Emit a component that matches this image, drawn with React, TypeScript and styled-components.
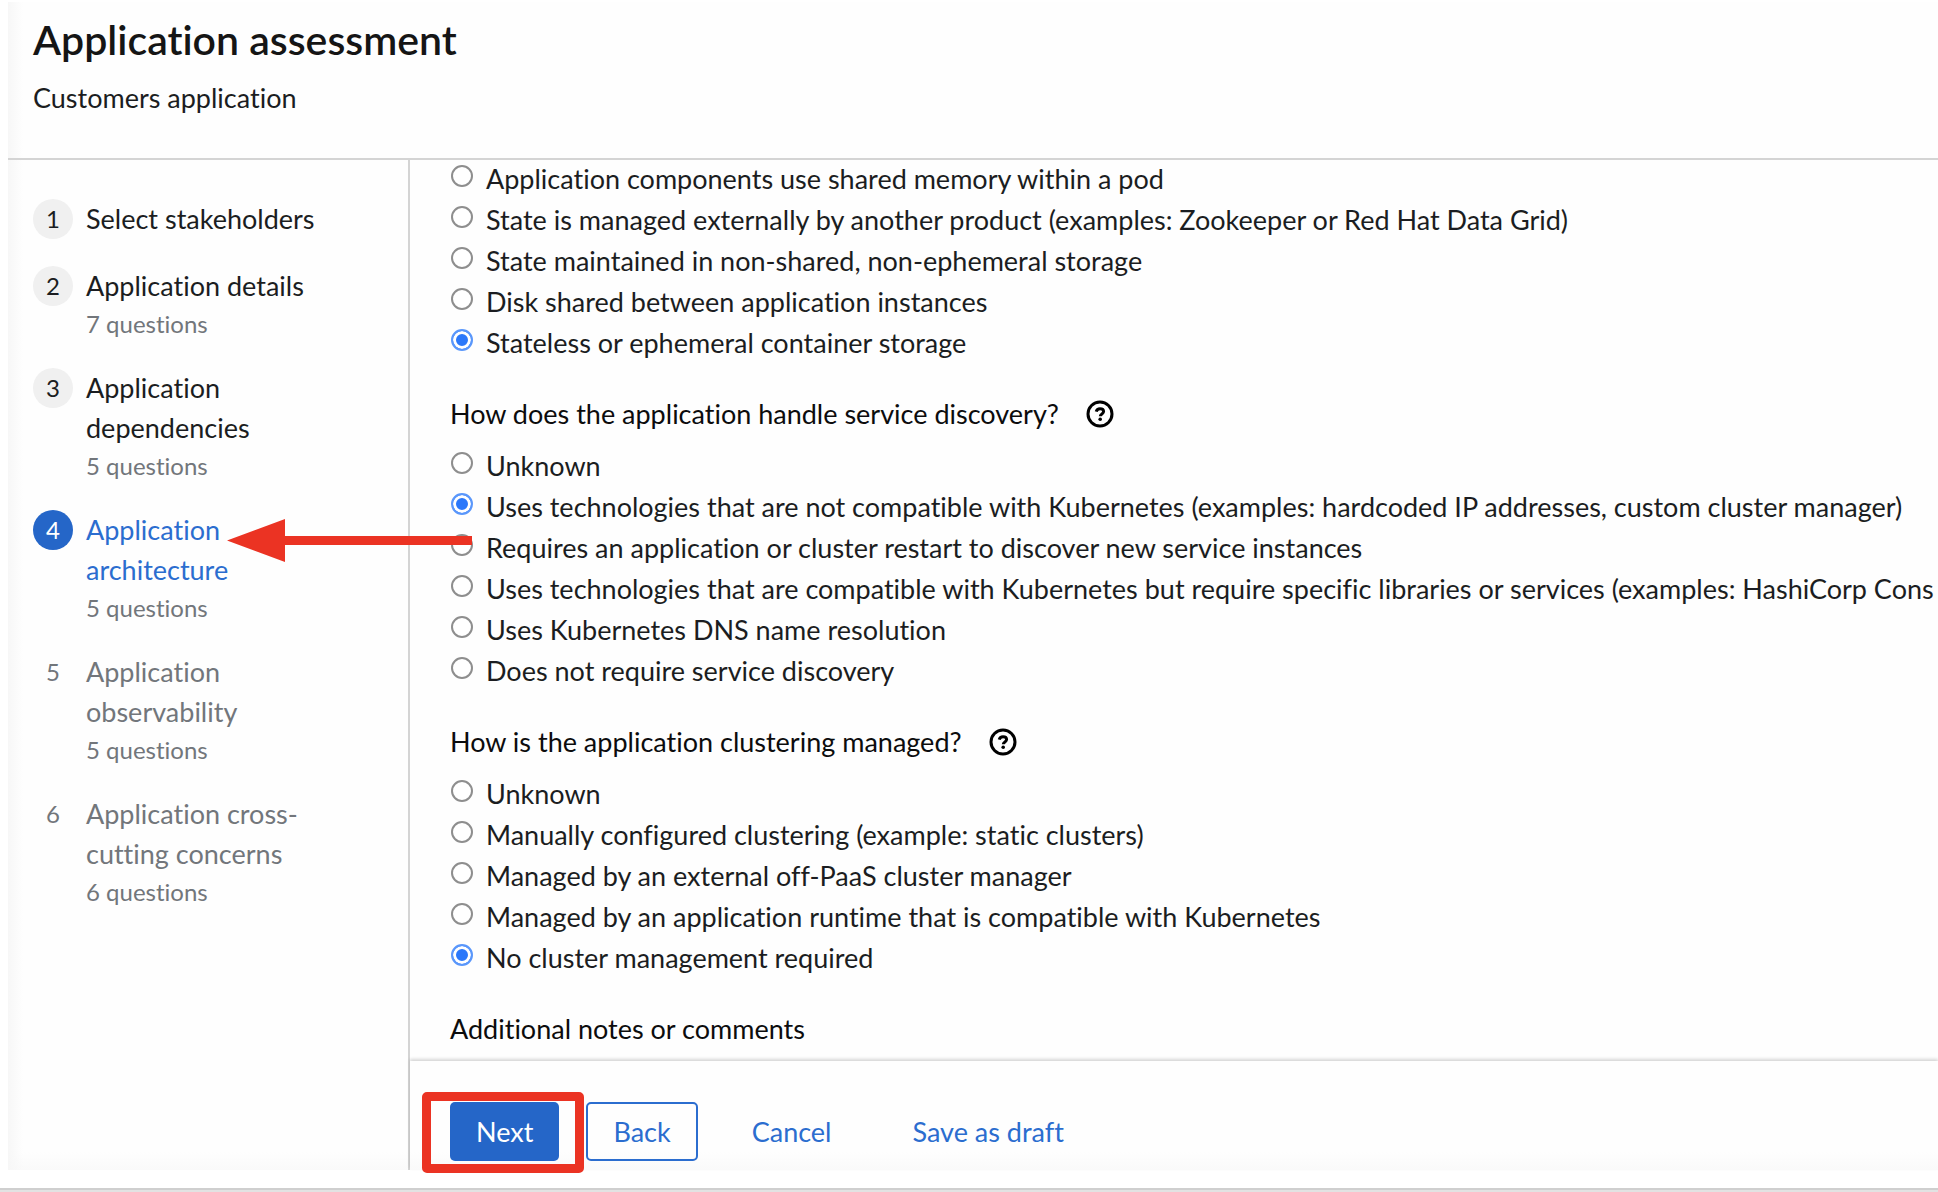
import React, { useState } from "react";
import styled, { createGlobalStyle } from "styled-components";

const colors = {
  text: "#1b1d21",
  muted: "#72767b",
  blue: "#2566c8",
  link: "#2b6dcf",
  radio: "#2b78fa",
  rule: "#d4d4d4",
  mark: "#eb3323",
};

const GlobalStyle = createGlobalStyle`
  *, *::before, *::after { box-sizing: border-box; }
  body {
    margin: 0;
    background: #fff;
    color: ${colors.text};
    font-family: Lato, "Open Sans", sans-serif;
    font-size: 27px;
    line-height: 40px;
    font-variant-ligatures: none;
  }
`;

const Page = styled.div`
  display: flex;
  flex-direction: column;
  height: 100vh;
  padding: 2px 0 0 8px;
  overflow: hidden;
`;

const Wizard = styled.div`
  flex: 1;
  min-height: 0;
  display: flex;
  flex-direction: column;
  background:
    linear-gradient(to right, #f7f7f7, rgba(255, 255, 255, 0) 15px),
    linear-gradient(to top, #fafafa, rgba(255, 255, 255, 0) 18px),
    #fefefe;
`;

const Header = styled.header`
  padding: 12px 25px 36px;
  border-bottom: 2px solid ${colors.rule};
`;

const Title = styled.h1`
  margin: 0;
  color: #151515;
  font-size: 41px;
  line-height: 52px;
  font-weight: 600;
`;

const Subtitle = styled.p`
  margin: 12px 0 4px;
`;

const Body = styled.div`
  flex: 1;
  min-height: 0;
  display: flex;
`;

const Nav = styled.nav`
  flex: 0 0 402px;
  padding: 39px 48px 0 25px;
  border-right: 2px solid ${colors.rule};
`;

const Steps = styled.ol`
  display: flex;
  flex-direction: column;
  gap: 27px;
  margin: 0;
  padding: 0;
  list-style: none;
`;

const Step = styled.li`
  position: relative;
`;

type State = "done" | "current" | "todo";

const StepButton = styled.button<{ $state: State }>`
  display: flex;
  gap: 13px;
  width: 100%;
  padding: 0;
  border: 0;
  background: none;
  font: inherit;
  text-align: left;
  cursor: pointer;
  color: ${({ $state }) =>
    $state === "current" ? colors.link : $state === "todo" ? colors.muted : colors.text};
`;

const StepNumber = styled.span<{ $state: State }>`
  flex: 0 0 40px;
  height: 40px;
  border-radius: 50%;
  font-size: 24px;
  text-align: center;
  color: ${({ $state }) => ($state === "current" ? "#fff" : "inherit")};
  background: ${({ $state }) =>
    $state === "current" ? colors.blue : $state === "done" ? "#f0f0f0" : "none"};
`;

const StepText = styled.span`
  display: flex;
  flex-direction: column;
`;

const StepNote = styled.span`
  font-size: 24px;
  line-height: 35px;
  color: ${colors.muted};
`;

const Arrow = styled.svg`
  position: absolute;
  left: 194px;
  top: 9px;
  width: 245px;
  height: 43px;
  z-index: 1;
`;

const Main = styled.main`
  flex: 1;
  min-width: 0;
  display: flex;
  flex-direction: column;
`;

const Questions = styled.form`
  flex: 1;
  min-height: 0;
  overflow: hidden;
  padding-left: 40px;
  display: flex;
  flex-direction: column;
  gap: 34px;
`;

const Question = styled.fieldset`
  flex: none;
  margin: 0;
  padding: 0;
  border: 0;
`;

const Legend = styled.legend`
  display: flex;
  align-items: center;
  gap: 27px;
  padding: 0 0 15px;
  line-height: 36px;
  color: #0c0c0d;
`;

const HelpButton = styled.button`
  display: flex;
  padding: 0;
  border: 0;
  background: none;
  color: #000;
  cursor: pointer;
`;

const Options = styled.div`
  display: flex;
  flex-direction: column;
  gap: 3px;
`;

const Option = styled.label`
  display: flex;
  gap: 13px;
  line-height: 38px;
  white-space: nowrap;
`;

const Radio = styled.input`
  appearance: none;
  flex: none;
  width: 22px;
  height: 22px;
  margin: 5px 0 0 1px;
  border: 2px solid #8e8e8e;
  border-radius: 50%;
  background: #fff;
  &:checked {
    border-color: #5a97fb;
    background: ${colors.radio};
    box-shadow: inset 0 0 0 3px #fff;
  }
`;

const NotesHeading = styled.p`
  flex: none;
  margin: 0;
  line-height: 36px;
  color: #0c0c0d;
`;

const Footer = styled.footer`
  display: flex;
  gap: 27px;
  padding: 41px 40px 9px;
  box-shadow: 0 -2px 3px rgba(0, 0, 0, 0.16);
`;

const Button = styled.button<{ $kind: "primary" | "secondary" | "link" }>`
  height: 59px;
  border-radius: 5px;
  font: inherit;
  cursor: pointer;
  border: ${({ $kind }) => ($kind === "secondary" ? `2px solid ${colors.link}` : "0")};
  padding: ${({ $kind }) =>
    $kind === "secondary" ? "0 25px" : $kind === "primary" ? "0 26px" : "0 27px"};
  background: ${({ $kind }) => ($kind === "primary" ? colors.blue : "none")};
  color: ${({ $kind }) => ($kind === "primary" ? "#fff" : colors.link)};
`;

const Marked = styled.div`
  position: relative;
  display: flex;
  &::after {
    content: "";
    position: absolute;
    inset: -10px -25px -12px -28px;
    border: 9px solid ${colors.mark};
    border-radius: 5px;
    pointer-events: none;
  }
`;

const BottomEdge = styled.div`
  flex: none;
  height: 4px;
  margin: 18px 0 0 -8px;
  border-top: 2px solid #cfcfcf;
  background: #e2e2e2;
`;

const steps: { name: string; note?: string; state: State }[] = [
  { name: "Select stakeholders", state: "done" },
  { name: "Application details", note: "7 questions", state: "done" },
  { name: "Application dependencies", note: "5 questions", state: "done" },
  { name: "Application architecture", note: "5 questions", state: "current" },
  { name: "Application observability", note: "5 questions", state: "todo" },
  { name: "Application cross-cutting concerns", note: "6 questions", state: "todo" },
];

const questions: { id: string; title?: string; options: string[]; answer: number }[] = [
  {
    id: "state",
    options: [
      "Application components use shared memory within a pod",
      "State is managed externally by another product (examples: Zookeeper or Red Hat Data Grid)",
      "State maintained in non-shared, non-ephemeral storage",
      "Disk shared between application instances",
      "Stateless or ephemeral container storage",
    ],
    answer: 4,
  },
  {
    id: "discovery",
    title: "How does the application handle service discovery?",
    options: [
      "Unknown",
      "Uses technologies that are not compatible with Kubernetes (examples: hardcoded IP addresses, custom cluster manager)",
      "Requires an application or cluster restart to discover new service instances",
      "Uses technologies that are compatible with Kubernetes but require specific libraries or services (examples: HashiCorp Cons",
      "Uses Kubernetes DNS name resolution",
      "Does not require service discovery",
    ],
    answer: 1,
  },
  {
    id: "clustering",
    title: "How is the application clustering managed?",
    options: [
      "Unknown",
      "Manually configured clustering (example: static clusters)",
      "Managed by an external off-PaaS cluster manager",
      "Managed by an application runtime that is compatible with Kubernetes",
      "No cluster management required",
    ],
    answer: 4,
  },
];

function HelpIcon() {
  return (
    <svg width="28" height="28" viewBox="0 0 28 28" fill="none" aria-hidden="true">
      <circle cx="14" cy="14" r="12" stroke="currentColor" strokeWidth="3" />
      <path
        d="M10.2 11.6C10.7 9.8 12.1 8.8 14 8.8c2.1 0 3.6 1.1 3.6 2.8 0 2.3-3.3 2.3-3.3 4.6"
        stroke="currentColor"
        strokeWidth="3"
      />
      <circle cx="14.2" cy="19.3" r="1.8" fill="currentColor" />
    </svg>
  );
}

function QuestionGroup({ question }: { question: (typeof questions)[number] }) {
  const [answer, setAnswer] = useState(question.answer);
  return (
    <Question>
      {question.title && (
        <Legend>
          {question.title}
          <HelpButton type="button" aria-label="More info">
            <HelpIcon />
          </HelpButton>
        </Legend>
      )}
      <Options>
        {question.options.map((label, i) => (
          <Option key={label} htmlFor={`${question.id}-${i}`}>
            <Radio
              type="radio"
              id={`${question.id}-${i}`}
              name={question.id}
              checked={answer === i}
              onChange={() => setAnswer(i)}
            />
            {label}
          </Option>
        ))}
      </Options>
    </Question>
  );
}

export default function App() {
  return (
    <>
      <GlobalStyle />
      <Page>
        <Wizard>
          <Header>
            <Title>Application assessment</Title>
            <Subtitle>Customers application</Subtitle>
          </Header>
          <Body>
            <Nav aria-label="Assessment steps">
              <Steps>
                {steps.map((step, i) => (
                  <Step key={step.name}>
                    <StepButton $state={step.state} type="button">
                      <StepNumber $state={step.state}>{i + 1}</StepNumber>
                      <StepText>
                        {step.name}
                        {step.note && <StepNote>{step.note}</StepNote>}
                      </StepText>
                    </StepButton>
                    {step.state === "current" && (
                      <Arrow viewBox="0 0 245 43" fill={colors.mark} aria-hidden="true">
                        <path d="M0 21.5 58 0v17h187v9H58v17z" />
                      </Arrow>
                    )}
                  </Step>
                ))}
              </Steps>
            </Nav>
            <Main>
              <Questions>
                {questions.map((q) => (
                  <QuestionGroup key={q.id} question={q} />
                ))}
                <NotesHeading>Additional notes or comments</NotesHeading>
              </Questions>
              <Footer>
                <Marked>
                  <Button $kind="primary" type="button">Next</Button>
                </Marked>
                <Button $kind="secondary" type="button">Back</Button>
                <Button $kind="link" type="button">Cancel</Button>
                <Button $kind="link" type="button">Save as draft</Button>
              </Footer>
            </Main>
          </Body>
        </Wizard>
        <BottomEdge />
      </Page>
    </>
  );
}
